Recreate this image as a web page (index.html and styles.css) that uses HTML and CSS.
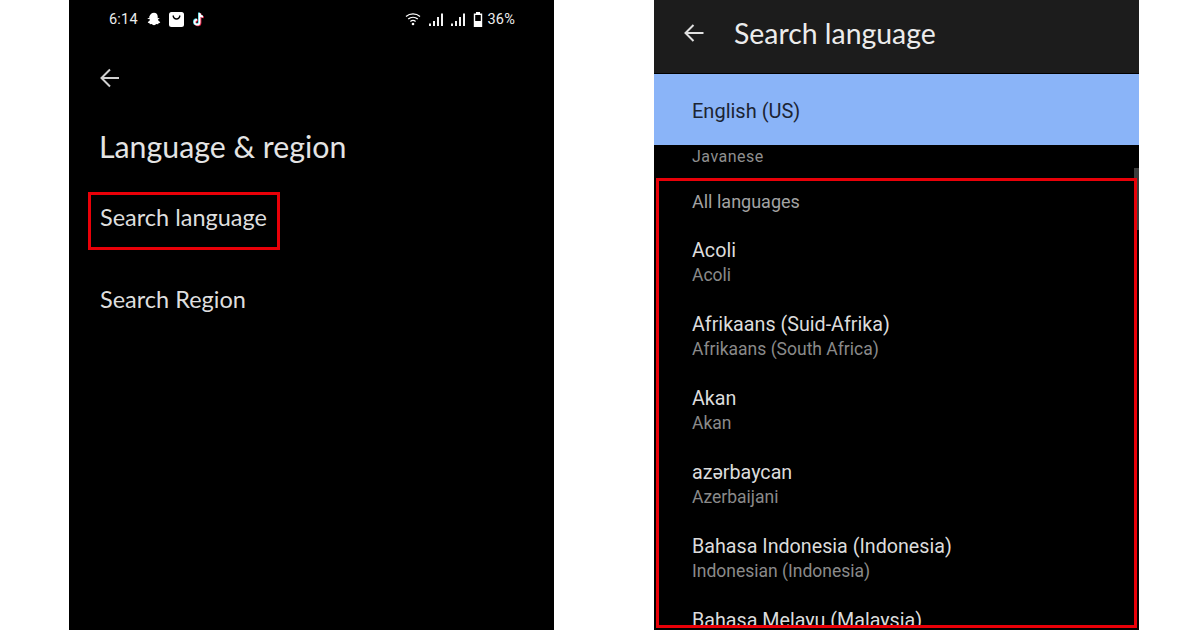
FILE: index.html
```html
<!DOCTYPE html>
<html lang="en">
<head>
    <meta charset="UTF-8">
    <meta name="viewport" content="width=device-width, initial-scale=1.0">
    <title>Search language</title>
    <link rel="stylesheet" href="styles.css">
</head>
<body>

    <!-- Left phone: language and region settings -->
    <div class="phone">
        <div class="status-bar">
            <div class="status-group">
                <span class="clock">6:14</span>
                <svg class="ic-ghost" viewBox="0 0 14 14"><path d="M7 .8c2.300 0 3.700 1.700 3.700 3.800v1.600l1.400-.3.300.8-1.500.8c.3 1.200 1.200 2.100 2.300 2.500l-.2.800-1.500.4-.4 1-1.600-.1c-.8.300-1.400 1.100-2.500 1.100s-1.700-.8-2.500-1.100l-1.600.1-.4-1-1.500-.4-.2-.8c1.100-.4 2-1.300 2.300-2.500L.6 6.700l.3-.8 1.400.3V4.600C3.300 2.500 4.700.8 7 .8z" fill="#fff"/></svg>
                <svg class="ic-bag" viewBox="0 0 15 15"><rect width="15" height="15" rx="2.500" fill="#fff"/><path d="M4 3.500c.5 2.400 1.800 3.500 3.500 3.500S10.500 5.900 11 3.500" fill="none" stroke="#000" stroke-width="1.300"/></svg>
                <svg class="ic-tiktok" viewBox="0 0 14 15">
                    <path d="M8.600 1v9.200a2.500 2.500 0 1 1-2.500-2.500M8.600 1.500c.3 1.900 1.500 3 3.400 3.200" fill="none" stroke="#e8274b" stroke-width="2" transform="translate(.8 .6)"/>
                    <path d="M8.600 1v9.200a2.500 2.500 0 1 1-2.500-2.500M8.600 1.500c.3 1.900 1.500 3 3.400 3.200" fill="none" stroke="#4fd8e6" stroke-width="2" transform="translate(-.6 -.4)"/>
                    <path d="M8.600 1v9.200a2.500 2.500 0 1 1-2.500-2.500M8.600 1.500c.3 1.900 1.500 3 3.400 3.200" fill="none" stroke="#fff" stroke-width="1.700"/>
                </svg>
            </div>
            <div class="status-group">
                <svg class="ic-wifi" viewBox="0 0 16 14"><g fill="none" stroke="#fff" stroke-width="1.300"><path d="M1 4.500c4-3.400 10-3.400 14 0"/><path d="M3.200 7c2.800-2.300 6.800-2.300 9.600 0"/><path d="M5.400 9.400c1.500-1.200 3.700-1.200 5.200 0"/></g><circle cx="8" cy="12" r="1.300" fill="#fff"/></svg>
                <svg class="ic-signal" viewBox="0 0 15 13"><path d="M1 10.500h2V13H1zM5 8h2v5H5zM9 4h2v9H9zM13 .5h2V13h-2z" fill="#f2f2f2"/></svg>
                <svg class="ic-signal" viewBox="0 0 15 13"><path d="M1 10.500h2V13H1zM5 8h2v5H5zM9 4h2v9H9zM13 .5h2V13h-2z" fill="#f2f2f2"/></svg>
                <svg class="ic-battery" viewBox="0 0 10 15"><path d="M3 0h4v1.500h2.200V15H.8V1.500H3z" fill="#fff"/><rect x="2.200" y="3" width="5.600" height="6" fill="#000"/></svg>
                <span class="battery-text">36%</span>
            </div>
        </div>

        <svg class="back-arrow" viewBox="0 0 22 22"><path d="M20 11H2.500M11 2.500 2.500 11l8.500 8.500" fill="none" stroke="#d0d0d0" stroke-width="2"/></svg>

        <h1 class="settings-title">Language &amp; region</h1>
        <div class="settings-row highlighted">Search language</div>
        <div class="settings-row">Search Region</div>
    </div>

    <!-- Right phone: language list -->
    <div class="phone">
        <div class="app-bar">
            <svg class="app-bar-arrow" viewBox="0 0 22 22"><path d="M20.500 11H2.500M10.500 3 2.500 11l8 8" fill="none" stroke="#e0e0e0" stroke-width="2"/></svg>
            <span class="app-bar-title">Search language</span>
        </div>
        <div class="selected-language">English (US)</div>
        <div class="peek-row">Javanese</div>
        <div class="scroll-thumb"></div>

        <div class="language-list">
            <div class="list-heading">All languages</div>
            <div class="language-item">
                <div class="language-name">Acoli</div>
                <div class="language-sub">Acoli</div>
            </div>
            <div class="language-item">
                <div class="language-name">Afrikaans (Suid-Afrika)</div>
                <div class="language-sub">Afrikaans (South Africa)</div>
            </div>
            <div class="language-item">
                <div class="language-name">Akan</div>
                <div class="language-sub">Akan</div>
            </div>
            <div class="language-item">
                <div class="language-name">azərbaycan</div>
                <div class="language-sub">Azerbaijani</div>
            </div>
            <div class="language-item">
                <div class="language-name">Bahasa Indonesia (Indonesia)</div>
                <div class="language-sub">Indonesian (Indonesia)</div>
            </div>
            <div class="language-item">
                <div class="language-name">Bahasa Melayu (Malaysia)</div>
            </div>
        </div>
    </div>

</body>
</html>
```

FILE: styles.css
```css
html, body {
    height: 100%;
}
body {
    margin: 0;
    padding-left: 69px;
    display: flex;
    gap: 100px;
    background-color: #fff;
    overflow: hidden;
    font-family: Roboto, Arial, sans-serif;
}
.phone {
    position: relative;
    width: 485px;
    height: 630px;
    background-color: #000;
    overflow: hidden;
}

/* Status bar */
.status-bar {
    height: 38px;
    padding: 0 39px 0 40px;
    display: flex;
    justify-content: space-between;
    align-items: center;
    color: #ededed;
    font-size: 14.5px;
    font-weight: 400;
    letter-spacing: .2px;
}
.status-group {
    display: flex;
    align-items: center;
}
.clock {
    margin-right: 9px;
}
.ic-ghost {
    width: 14px;
    height: 14px;
    margin-right: 8px;
}
.ic-bag {
    width: 15px;
    height: 15px;
    margin-right: 7px;
}
.ic-tiktok {
    width: 14px;
    height: 15px;
}
.ic-wifi {
    width: 16px;
    height: 14px;
    margin-right: 7px;
}
.ic-signal {
    width: 15px;
    height: 13px;
    margin-right: 7px;
}
.ic-battery {
    width: 10px;
    height: 15px;
    margin: 0 4px 0 1px;
}

/* Left phone */
.back-arrow {
    display: block;
    width: 22px;
    height: 22px;
    margin: 29px 0 0 30px;
}
.settings-title {
    margin: 37px 0 0 30px;
    font-family: Lato, Arial, sans-serif;
    font-size: 30.3px;
    line-height: 40px;
    font-weight: 400;
    color: #e4e4e4;
}
.settings-row {
    width: 177px;
    height: 52px;
    margin: 26px 0 0 19px;
    padding-left: 9px;
    line-height: 44px;
    font-family: Lato, Arial, sans-serif;
    font-size: 23.5px;
    color: #dedede;
    border: 3px solid transparent;
}
.settings-row + .settings-row {
    margin-top: 24px;
}
.settings-row.highlighted {
    border-color: #e90008;
}

/* Right phone */
.app-bar {
    height: 65px;
    padding-bottom: 8px;
    display: flex;
    align-items: center;
    background-color: #1c1c1c;
}
.app-bar-arrow {
    width: 22px;
    height: 22px;
    margin: 0 29px 0 29px;
}
.app-bar-title {
    font-family: Lato, Arial, sans-serif;
    font-size: 28.4px;
    color: #ececec;
}
.selected-language {
    height: 71px;
    margin-top: 1px;
    padding-left: 38px;
    line-height: 74px;
    background-color: #8ab4f8;
    color: #1c2433;
    font-size: 20px;
}
.peek-row {
    height: 33px;
    padding-left: 38px;
    line-height: 24px;
    font-size: 16px;
    letter-spacing: .5px;
    color: #8f8f8f;
}
.scroll-thumb {
    position: absolute;
    right: 0;
    top: 168px;
    width: 5px;
    height: 62px;
    background-color: #3c3c3c;
}
.language-list {
    position: relative;
    height: 450px;
    margin: 0 2px;
    padding-left: 33px;
    border: 3px solid #e90008;
    overflow: hidden;
    box-sizing: border-box;
}
.list-heading {
    height: 44px;
    line-height: 41px;
    font-size: 18px;
    font-weight: 400;
    color: #a3a3a3;
}
.language-item {
    height: 74px;
    padding-top: 11px;
    box-sizing: border-box;
}
.language-name {
    height: 26px;
    line-height: 29px;
    font-size: 19.7px;
    color: #dcdcdc;
}
.language-sub {
    line-height: 26px;
    font-size: 17.5px;
    color: #8a8a8a;
}
```
